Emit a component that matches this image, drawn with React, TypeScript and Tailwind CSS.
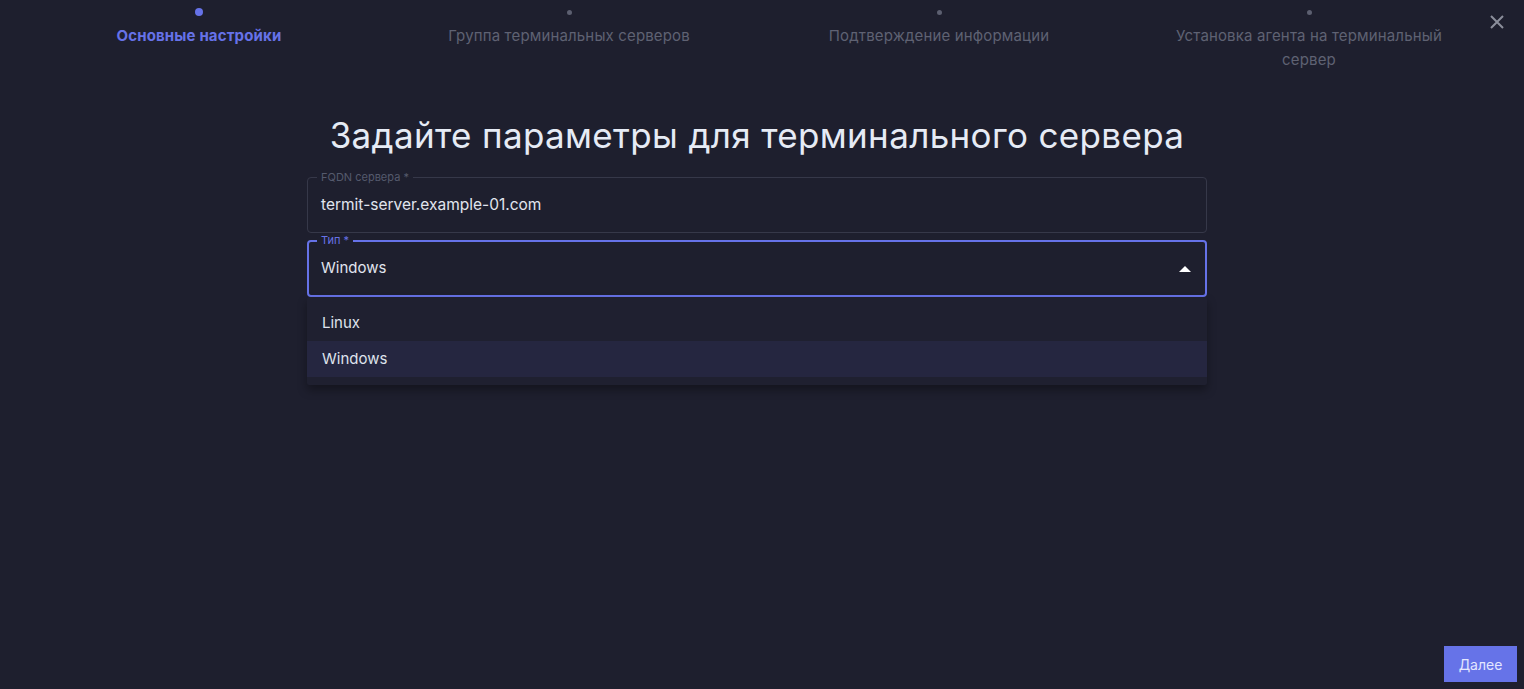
import { useState } from 'react';

const STEPS = [
  'Основные настройки',
  'Группа терминальных серверов',
  'Подтверждение информации',
  'Установка агента на терминальный сервер',
];

const OPTIONS = ['Linux', 'Windows'];

const FONT = { fontFamily: 'Inter, "Noto Sans", sans-serif' };

function Stepper({ active }: { active: number }) {
  return (
    <div className="grid grid-cols-4 w-[1480px] ml-[14px]">
      {STEPS.map((label, i) => (
        <div key={label} className="flex flex-col items-center px-[50px]">
          <div className="h-[24px] flex items-center">
            <span
              className={
                i === active
                  ? 'w-[8px] h-[8px] rounded-full bg-[#6672e8]'
                  : 'w-[5px] h-[5px] rounded-full bg-[#5c5f70]'
              }
            />
          </div>
          <span
            className={`text-center text-[15px] leading-[24px] tracking-[0.15px] ${
              i === active ? 'text-[#6672e8] font-bold' : 'text-[#5f6273]'
            }`}
          >
            {label}
          </span>
        </div>
      ))}
    </div>
  );
}

export default function App() {
  const [value, setValue] = useState('Windows');
  const [open, setOpen] = useState(true);

  return (
    <div className="w-[1524px] h-[689px] bg-[#1e1f2e] relative overflow-hidden" style={FONT}>
      <Stepper active={0} />

      {/* Close */}
      <button className="absolute top-[15px] right-[20px] text-[#8b8e9b]">
        <svg width="14" height="14" viewBox="0 0 14 14" fill="none" stroke="currentColor" strokeWidth="2">
          <path d="M1 1l12 12M13 1L1 13" />
        </svg>
      </button>

      <div className="flex justify-center pr-[10px] pt-[39px]">
        <div className="w-[900px] flex flex-col">
          <h1 className="text-center text-[35px] leading-[48px] text-[#e6ebf5] tracking-[0.35px] mb-[18px]">
            Задайте параметры для терминального сервера
          </h1>

          {/* FQDN */}
          <div className="relative h-[56px] border border-[#363849] rounded-[4px] flex items-center px-[13px]">
            <span className="absolute -top-[8px] left-[9px] px-[4px] bg-[#1e1f2e] text-[11px] leading-[14px] text-[#555a6d]">
              FQDN сервера *
            </span>
            <span className="text-[15.5px] text-[#e1e5ee]">termit-server.example-01.com</span>
          </div>

          {/* Type select */}
          <div className="relative mt-[7px]">
            <div
              onClick={() => setOpen(!open)}
              className="relative h-[57px] border-2 border-[#6672e8] rounded-[4px] flex items-center justify-between pl-[12px] pr-[14px] cursor-pointer"
            >
              <span className="absolute -top-[9px] left-[8px] px-[4px] bg-[#1e1f2e] text-[11px] leading-[14px] text-[#6672e8]">
                Тип *
              </span>
              <span className="text-[15px] text-[#e1e5ee]">{value}</span>
              <svg width="12" height="6" viewBox="0 0 12 6" className="text-white">
                <path d="M0 6L6 0l6 6z" fill="currentColor" />
              </svg>
            </div>

            {open && (
              <div className="absolute top-full left-0 right-0 py-[8px] bg-[#1f2030] shadow-[0_5px_10px_rgba(0,0,0,0.35)] rounded-[2px] z-10">
                {OPTIONS.map((opt) => (
                  <div
                    key={opt}
                    onClick={() => {
                      setValue(opt);
                      setOpen(false);
                    }}
                    className={`h-[36px] flex items-center px-[15px] text-[15px] text-[#dfe3ec] cursor-pointer ${
                      opt === value ? 'bg-[#252640]' : 'hover:bg-[#23243a]'
                    }`}
                  >
                    {opt}
                  </div>
                ))}
              </div>
            )}
          </div>
        </div>
      </div>

      <button className="absolute right-[7px] bottom-[7px] w-[73px] h-[36px] bg-[#6673e8] text-[14px] text-[#e3e6ff]">
        Далее
      </button>
    </div>
  );
}
